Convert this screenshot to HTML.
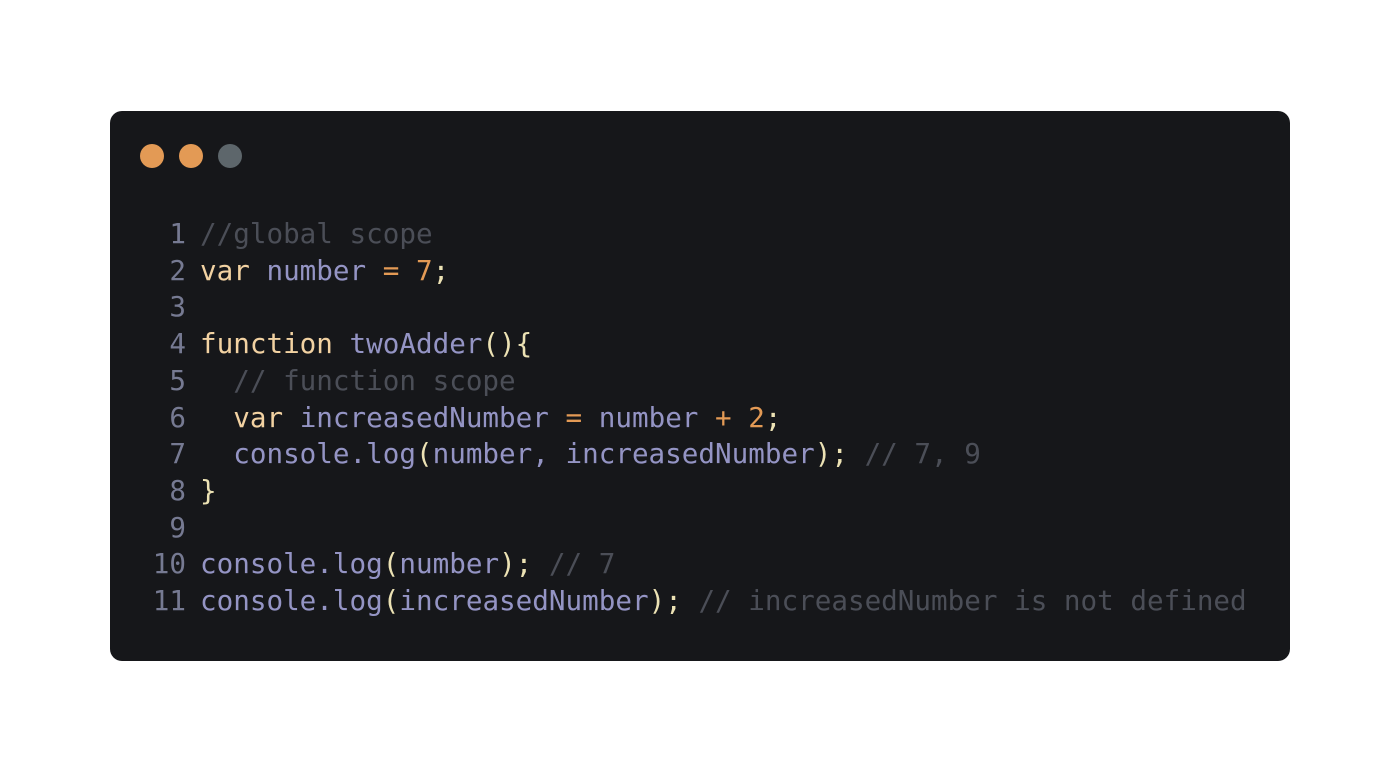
<!DOCTYPE html>
<html><head><style>
body{margin:0;width:1400px;height:773px;background:#fff;position:relative;overflow:hidden}
.card{position:absolute;left:110px;top:111px;width:1180px;height:550px;background:#16171a;border-radius:12px}
.dot{position:absolute;top:33px;width:24px;height:24px;border-radius:50%}
pre{position:absolute;left:0;top:105px;margin:0;font-family:"DejaVu Sans Mono","Liberation Mono",monospace;font-size:27.6px;line-height:36.7px;color:#9494c4}
.n{color:#767a92;display:inline-block;width:76px;text-align:right;margin-right:14px}
.k{color:#f2d2a2}.o{color:#e39a55}.c{color:#4b4e57}.p{color:#ece2b4}
</style></head><body>
<div class="card">
<div class="dot" style="left:30px;background:#e39a55"></div>
<div class="dot" style="left:69px;background:#e39a55"></div>
<div class="dot" style="left:108px;background:#5d666b"></div>
<pre><span class="n">1</span><span class="c">//global scope</span>
<span class="n">2</span><span class="k">var</span> number <span class="o">=</span> <span class="o">7</span><span class="p">;</span>
<span class="n">3</span>
<span class="n">4</span><span class="k">function</span> twoAdder<span class="p">(){</span>
<span class="n">5</span>  <span class="c">// function scope</span>
<span class="n">6</span>  <span class="k">var</span> increasedNumber <span class="o">=</span> number <span class="o">+</span> <span class="o">2</span><span class="p">;</span>
<span class="n">7</span>  console.log<span class="p">(</span>number, increasedNumber<span class="p">);</span> <span class="c">// 7, 9</span>
<span class="n">8</span><span class="p">}</span>
<span class="n">9</span>
<span class="n">10</span>console.log<span class="p">(</span>number<span class="p">);</span> <span class="c">// 7</span>
<span class="n">11</span>console.log<span class="p">(</span>increasedNumber<span class="p">);</span> <span class="c">// increasedNumber is not defined</span></pre>
</div>
</body></html>
